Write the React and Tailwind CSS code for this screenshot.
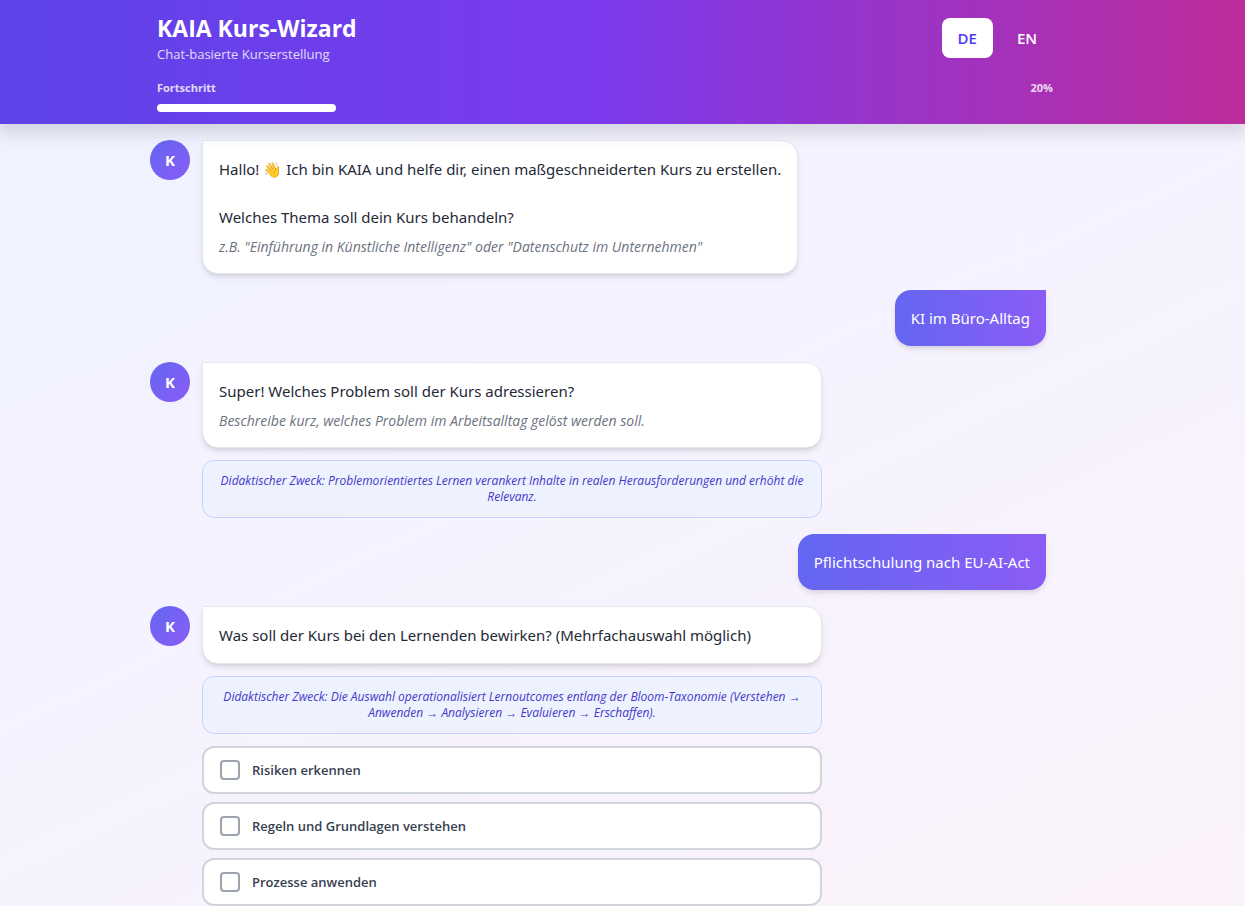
import { useState } from 'react';

const OUTCOMES = [
    { id: 'risiken', label: 'Risiken erkennen' },
    { id: 'regeln', label: 'Regeln und Grundlagen verstehen' },
    { id: 'prozesse', label: 'Prozesse anwenden' },
];

const LANGUAGES = ['DE', 'EN'];

function Header({ language, onLanguageChange, progress }) {
    return (
        <header className="relative bg-[linear-gradient(90deg,#5d43e7_0%,#7c3aed_48%,#bd2c9b_100%)] py-3 pr-[35px] text-white shadow-[0_8px_15px_2px_rgba(0,0,0,0.12)]">
            <div className="mx-auto max-w-4xl">
                <div className="flex items-center justify-between">
                    <div>
                        <h1 className="text-[23px] leading-8 font-bold">KAIA Kurs-Wizard</h1>
                        <p className="text-[13px] leading-5 text-white/80">Chat-basierte Kurserstellung</p>
                    </div>
                    <div className="flex gap-2">
                        {LANGUAGES.map(lang => (
                            <button
                                key={lang}
                                type="button"
                                onClick={() => onLanguageChange(lang)}
                                className={`rounded-lg px-4 py-2 text-[15px] leading-6 font-semibold transition ${lang === language ? 'bg-white text-indigo-600' : 'text-white hover:bg-white/10'}`}
                            >
                                {lang}
                            </button>
                        ))}
                    </div>
                </div>
                <div className="mt-4">
                    <div className="mb-2 flex justify-between text-[11px] leading-4 font-bold text-white/80">
                        <span>Fortschritt</span>
                        <span>{progress}%</span>
                    </div>
                    <div className="h-2 rounded-full">
                        <div className="h-2 rounded-full bg-white" style={{ width: `${progress}%` }} />
                    </div>
                </div>
            </div>
        </header>
    );
}

function BotMessage({ text, hint, purpose, children }) {
    return (
        <div className="flex max-w-[75%] items-start gap-3 self-start">
            <div className="flex size-10 shrink-0 items-center justify-center rounded-full bg-linear-to-br/srgb from-[#6366f1] to-[#8b5cf6] text-[15px] font-bold text-white">
                K
            </div>
            <div className="flex flex-1 flex-col gap-3">
                <div className="rounded-2xl rounded-tl-none border border-[#e5e7eb] bg-white p-4 shadow-md">
                    <p className="font-['Noto_Sans',sans-serif] text-[15px] leading-6 whitespace-pre-line text-[#1f2937]">{text}</p>
                    {hint && <p className="mt-2 text-[14px] leading-5 text-[#6b7280] italic">{hint}</p>}
                </div>
                {purpose && (
                    <p className="rounded-xl border border-[#c7d2fe] bg-[#eef2ff] px-4 py-3 text-center text-[12px] leading-4 text-[#4338ca] italic">
                        {purpose}
                    </p>
                )}
                {children}
            </div>
        </div>
    );
}

function UserMessage({ text }) {
    return (
        <div className="max-w-[75%] self-end rounded-2xl rounded-tr-none bg-linear-to-r/srgb from-[#6366f1] to-[#8b5cf6] p-4 font-['Noto_Sans',sans-serif] text-[15px] leading-6 text-white shadow-md">
            {text}
        </div>
    );
}

export default function App() {
    const [language, setLanguage] = useState('DE');
    const [selected, setSelected] = useState([]);

    const toggle = (id) => {
        setSelected(selected.includes(id) ? selected.filter(s => s !== id) : [...selected, id]);
    };

    return (
        <div className="flex h-screen flex-col overflow-hidden bg-[linear-gradient(155deg,#eef2ff_0%,#f5f3ff_49%,#fbf2fa_100%)] font-['Open_Sans','Noto_Sans',sans-serif]">
            <Header language={language} onLanguageChange={setLanguage} progress={20} />
            <main className="flex-1 overflow-x-hidden overflow-y-auto py-4 pr-[49px] [scrollbar-width:none]">
                <div className="mx-auto flex max-w-4xl flex-col gap-4">
                    <BotMessage
                        text={'Hallo! 👋 Ich bin KAIA und helfe dir, einen maßgeschneiderten Kurs zu erstellen.\n\nWelches Thema soll dein Kurs behandeln?'}
                        hint={'z.B. "Einführung in Künstliche Intelligenz" oder "Datenschutz im Unternehmen"'}
                    />
                    <UserMessage text="KI im Büro-Alltag" />
                    <BotMessage
                        text="Super! Welches Problem soll der Kurs adressieren?"
                        hint="Beschreibe kurz, welches Problem im Arbeitsalltag gelöst werden soll."
                        purpose="Didaktischer Zweck: Problemorientiertes Lernen verankert Inhalte in realen Herausforderungen und erhöht die Relevanz."
                    />
                    <UserMessage text="Pflichtschulung nach EU-AI-Act" />
                    <BotMessage
                        text="Was soll der Kurs bei den Lernenden bewirken? (Mehrfachauswahl möglich)"
                        purpose="Didaktischer Zweck: Die Auswahl operationalisiert Lernoutcomes entlang der Bloom-Taxonomie (Verstehen → Anwenden → Analysieren → Evaluieren → Erschaffen)."
                    >
                        <div className="flex flex-col gap-2">
                            {OUTCOMES.map(outcome => (
                                <label
                                    key={outcome.id}
                                    className="flex cursor-pointer items-center gap-3 rounded-xl border-2 border-[#d1d5db] bg-white px-4 py-3 text-[13px] leading-5 font-semibold text-[#374151] has-checked:border-indigo-500"
                                >
                                    <input
                                        type="checkbox"
                                        checked={selected.includes(outcome.id)}
                                        onChange={() => toggle(outcome.id)}
                                        className="size-5 appearance-none rounded-sm border-2 border-[#9ca3af] bg-white checked:border-indigo-600 checked:bg-indigo-600"
                                    />
                                    {outcome.label}
                                </label>
                            ))}
                        </div>
                    </BotMessage>
                </div>
            </main>
        </div>
    );
}
